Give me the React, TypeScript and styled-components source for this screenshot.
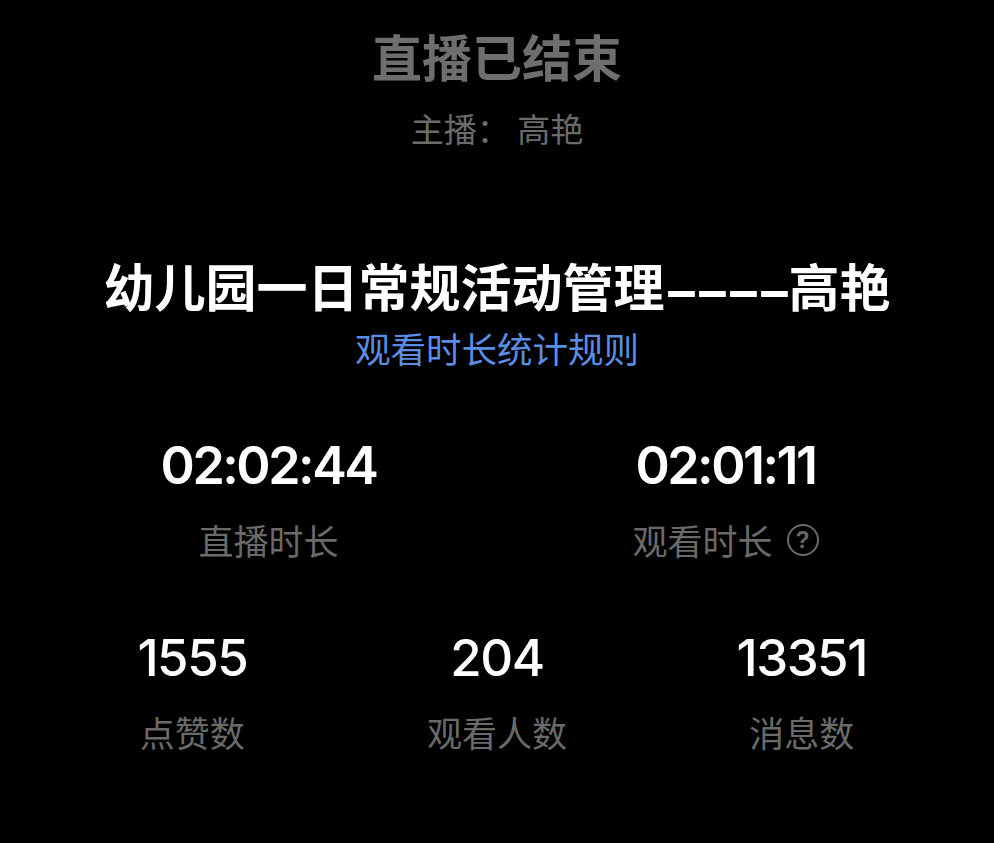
import React from 'react';
import styled, { createGlobalStyle } from 'styled-components';

const GlobalStyle = createGlobalStyle`
  html, body {
    margin: 0;
    padding: 0;
    background: #000;
  }
  body {
    font-family: "Noto Sans CJK SC", "Noto Sans", sans-serif;
  }
`;

const Page = styled.div`
  width: 994px;
  height: 843px;
  background: #000;
  display: flex;
  flex-direction: column;
  align-items: center;
  padding-top: 25px;
  box-sizing: border-box;
  overflow: hidden;
`;

const EndTitle = styled.div`
  font-size: 50px;
  line-height: 60px;
  font-weight: 600;
  color: #6e6e6e;
`;

const Host = styled.div`
  margin-top: 23px;
  font-size: 33px;
  line-height: 40px;
  color: #6b6b6b;
`;

const CourseTitle = styled.div`
  margin-top: 107px;
  height: 60px;
  font-size: 51px;
  line-height: 60px;
  font-weight: 700;
  color: #fff;
  white-space: nowrap;
`;

// the separator dashes are drawn wider than a plain hyphen in the source
const Dashes = styled.span`
  display: inline-block;
  line-height: 1;
  font-family: "Liberation Sans", Arial, sans-serif;
  font-weight: 700;
  font-size: 50px;
  letter-spacing: -1.9px;
  transform: scaleX(2.1);
  transform-origin: left center;
  margin-right: 65px;
`;

const RuleLink = styled.a`
  margin-top: 12px;
  font-size: 35.5px;
  line-height: 42px;
  color: #5b8de4;
  text-decoration: none;
`;

const StatsRow = styled.div<{ $cols: number; $top: number }>`
  width: 914px;
  margin-top: ${({ $top }) => $top}px;
  display: grid;
  grid-template-columns: repeat(${({ $cols }) => $cols}, 1fr);
`;

const Stat = styled.div`
  display: flex;
  flex-direction: column;
  align-items: center;
`;

const Value = styled.div<{ $bold?: boolean }>`
  font-family: Inter, "Liberation Sans", Arial, sans-serif;
  font-size: ${({ $bold }) => ($bold ? 52 : 51)}px;
  line-height: 60px;
  font-weight: ${({ $bold }) => ($bold ? 600 : 500)};
  letter-spacing: ${({ $bold }) => ($bold ? -2.5 : -1.5)}px;
  color: #fff;
`;

const Label = styled.div`
  margin-top: 23px;
  font-size: 35px;
  line-height: 42px;
  color: #6a6a6a;
  display: flex;
  align-items: center;
  gap: 14px;
`;

const HelpIcon = styled.span`
  width: 28px;
  height: 28px;
  border: 2.5px solid #6a6a6a;
  border-radius: 50%;
  display: inline-flex;
  align-items: center;
  justify-content: center;
  font-family: "Liberation Sans", Arial, sans-serif;
  font-size: 23px;
  font-weight: 700;
  line-height: 1;
  color: #6a6a6a;
`;

const App: React.FC = () => {
  return (
    <Page>
      <GlobalStyle />
      <EndTitle>直播已结束</EndTitle>
      <Host>主播：&nbsp;高艳</Host>
      <CourseTitle>
        幼儿园一日常规活动管理<Dashes>----</Dashes>高艳
      </CourseTitle>
      <RuleLink href="#">观看时长统计规则</RuleLink>

      <StatsRow $cols={2} $top={67}>
        <Stat>
          <Value $bold>02:02:44</Value>
          <Label>直播时长</Label>
        </Stat>
        <Stat>
          <Value $bold>02:01:11</Value>
          <Label>
            观看时长<HelpIcon>?</HelpIcon>
          </Label>
        </Stat>
      </StatsRow>

      <StatsRow $cols={3} $top={67}>
        <Stat>
          <Value>1555</Value>
          <Label>点赞数</Label>
        </Stat>
        <Stat>
          <Value>204</Value>
          <Label>观看人数</Label>
        </Stat>
        <Stat>
          <Value>13351</Value>
          <Label>消息数</Label>
        </Stat>
      </StatsRow>
    </Page>
  );
};

export default App;
